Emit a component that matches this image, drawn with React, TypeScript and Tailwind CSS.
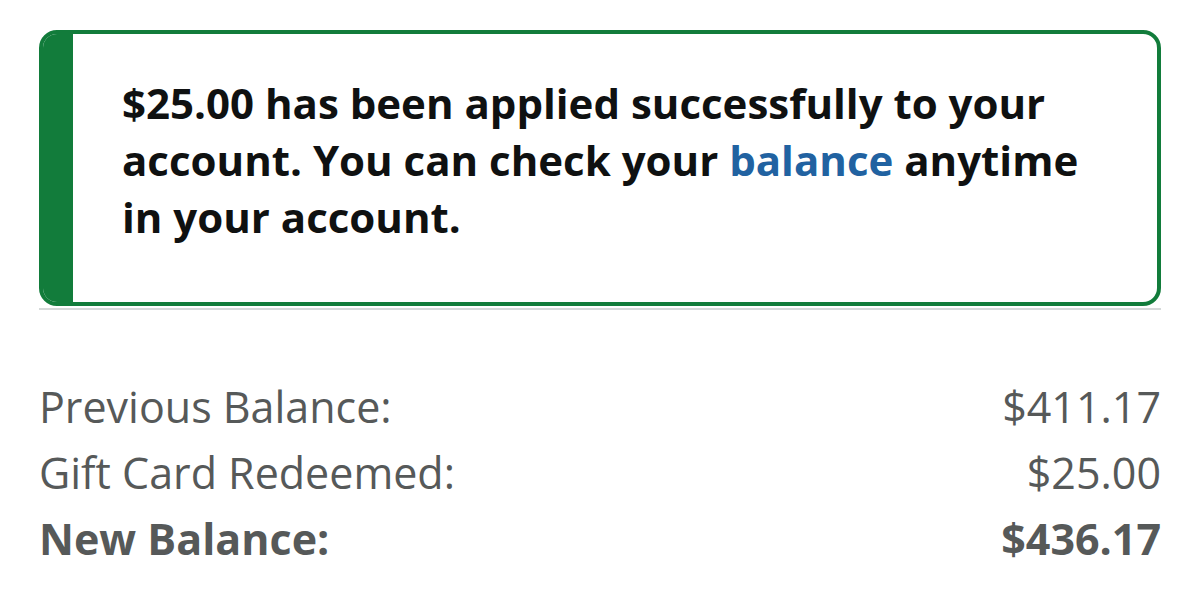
export default function App() {
  const rows = [
    { label: 'Previous Balance:', value: '$411.17', bold: false },
    { label: 'Gift Card Redeemed:', value: '$25.00', bold: false },
    { label: 'New Balance:', value: '$436.17', bold: true },
  ];

  return (
    <div className="w-[1200px] h-[611px] bg-white font-['Open_Sans',sans-serif] pt-[30px] px-[39px]">
      {/* Success alert */}
      <div className="flex h-[276px] rounded-[18px] border-4 border-[#127c3b] overflow-hidden">
        <div className="w-[30px] bg-[#127c3b] shrink-0"></div>
        <div className="pl-[49px] pr-[60px] pt-[40px] text-[42px] leading-[57px] font-bold text-[#0f1111]">
          $25.00 has been applied successfully to your account. You can check your{' '}
          <span className="text-[#2162a1]">balance</span> anytime in your account.
        </div>
      </div>
      <div className="h-[2px] bg-[#d5d9d9] mt-[2px]"></div>

      {/* Balance summary */}
      <div className="mt-[64px] text-[43px] leading-[66px] text-[#565959]">
        {rows.map((row) => (
          <div key={row.label} className={`flex justify-between ${row.bold ? 'font-bold' : ''}`}>
            <span>{row.label}</span>
            <span>{row.value}</span>
          </div>
        ))}
      </div>
    </div>
  );
}
